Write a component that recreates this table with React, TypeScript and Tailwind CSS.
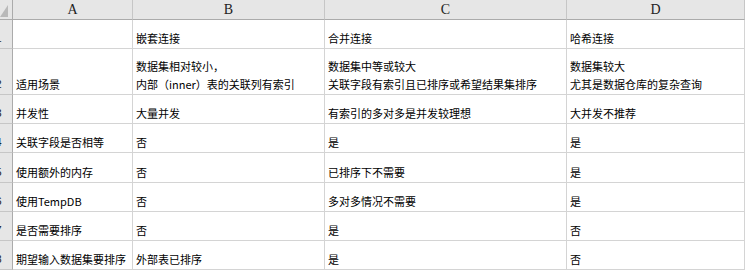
const COLS = ['A', 'B', 'C', 'D'];

const ROWS: { h: string; cells: string[][] }[] = [
  { h: 'h-[29px]', cells: [[''], ['嵌套连接'], ['合并连接'], ['哈希连接']] },
  {
    h: 'h-[46px]',
    cells: [
      ['适用场景'],
      ['数据集相对较小，', '内部（inner）表的关联列有索引'],
      ['数据集中等或较大', '关联字段有索引且已排序或希望结果集排序'],
      ['数据集较大', '尤其是数据仓库的复杂查询'],
    ],
  },
  { h: 'h-[29px]', cells: [['并发性'], ['大量并发'], ['有索引的多对多是并发较理想'], ['大并发不推荐']] },
  { h: 'h-[29px]', cells: [['关联字段是否相等'], ['否'], ['是'], ['是']] },
  { h: 'h-[30px]', cells: [['使用额外的内存'], ['否'], ['已排序下不需要'], ['是']] },
  { h: 'h-[29px]', cells: [['使用TempDB'], ['否'], ['多对多情况不需要'], ['是']] },
  { h: 'h-[29px]', cells: [['是否需要排序'], ['否'], ['是'], ['否']] },
  { h: 'h-[29px]', cells: [['期望输入数据集要排序'], ['外部表已排序'], ['是'], ['否']] },
];

export default function App() {
  return (
    <div className="w-[746px] h-[273px] overflow-hidden bg-white text-black font-['Noto_Sans_CJK_SC',sans-serif]">
      <div className="grid grid-cols-[13px_120px_192px_242px_178px]">
        <div className="h-[20px] bg-[#e6e6e6] border-r border-b border-[#ababab] overflow-hidden">
          <svg width="13" height="20" viewBox="0 0 13 20">
            <polygon points="0,17 8,5 8,17" fill="#b9b9b9" />
          </svg>
        </div>
        {COLS.map((c) => (
          <div
            key={c}
            className="h-[20px] bg-[#e6e6e6] border-r border-r-[#c6c6c6] border-b border-b-[#ababab] flex items-center justify-center font-['Liberation_Serif',serif] text-[14px] text-[#222]"
          >
            {c}
          </div>
        ))}
        {ROWS.map((row, i) => (
          <div key={i} className="contents">
            <div className={`${row.h} bg-[#e6e6e6] border-r border-r-[#ababab] border-b border-b-[#c6c6c6] overflow-hidden flex justify-end items-end pb-[1px]`}>
              <span className="w-[27px] shrink-0 text-center font-['Liberation_Sans',sans-serif] text-[11px] leading-[18px] text-[#222]">
                {i + 1}
              </span>
            </div>
            {row.cells.map((lines, j) => (
              <div
                key={j}
                className={`${row.h} border-r border-b border-[#d4d4d4] flex flex-col justify-end pl-[3px] pb-[1px] text-[11px] leading-[18px] whitespace-nowrap`}
              >
                {lines.map((t, k) => (
                  <span key={k}>{t}</span>
                ))}
              </div>
            ))}
          </div>
        ))}
      </div>
    </div>
  );
}
